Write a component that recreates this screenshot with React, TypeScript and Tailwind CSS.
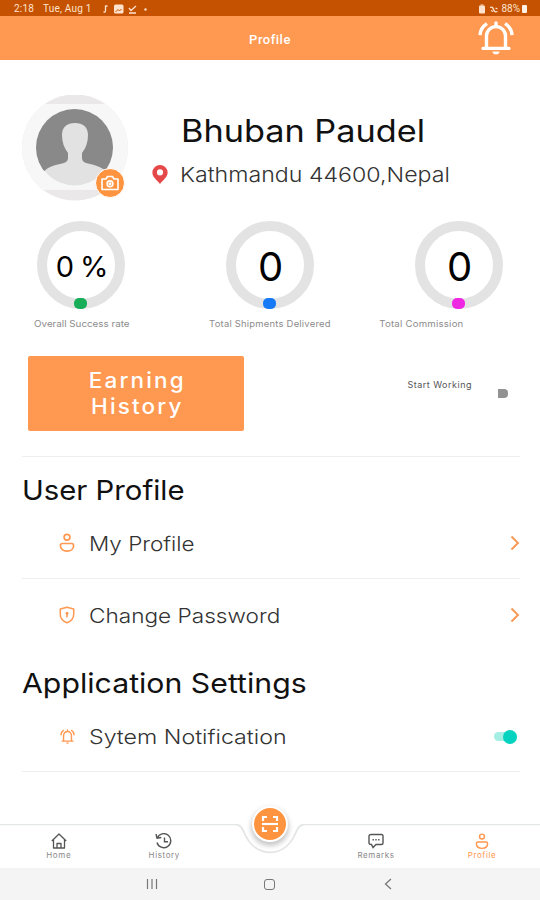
import type { ReactNode } from 'react';

interface IconProps {
    className?: string;
}

function BellIcon({ className }: IconProps) {
    return (
        <svg viewBox="0 0 36 36" preserveAspectRatio="none" fill="none" stroke="currentColor" strokeWidth="3.400" className={className}>
            <path d="M18 2v4M5 29h26M8.500 29V16a9.500 10 0 0 1 19 0v13" strokeLinecap="round" />
            <path d="M2 15C2.300 9.500 4.800 5.500 9 2.800M34 15C33.700 9.500 31.200 5.500 27 2.800" />
            <path d="M14.500 32.300h7a3.500 3 0 0 1-7 0z" fill="currentColor" stroke="none" />
        </svg>
    );
}

function UserIcon({ className }: IconProps) {
    return (
        <svg viewBox="0 0 16 20" fill="none" stroke="currentColor" strokeWidth="1.7" className={className}>
            <circle cx="8" cy="4.200" r="2.900" />
            <path d="M3.400 10.500h9.200c1.300 0 2 .8 2 1.900 0 3.400-2.700 5.700-6.600 5.700s-6.600-2.300-6.600-5.700c0-1.100.7-1.900 2-1.900z" />
        </svg>
    );
}

function ShieldIcon({ className }: IconProps) {
    return (
        <svg viewBox="0 0 16 18" fill="none" stroke="currentColor" strokeWidth="1.5" className={className}>
            <path d="M8 1.200 14.700 3v5.500c0 4-2.800 6.700-6.700 8.300-3.900-1.600-6.700-4.300-6.700-8.300V3z" strokeLinejoin="round" />
            <circle cx="8" cy="7.300" r="1.500" fill="currentColor" stroke="none" />
            <path d="M8 7.500v4" />
        </svg>
    );
}

function Ring({ value, label, dot, valueClass, labelClass }: { value: string; label: string; dot: string; valueClass: string; labelClass: string }) {
    return (
        <div className="flex w-[88px] flex-col items-center">
            <div className="relative flex size-[88px] items-center justify-center rounded-full border-[10px] border-[#e3e3e3]">
                <span className={`pt-[3px] pl-px whitespace-nowrap text-black ${valueClass}`}>{value}</span>
                <span className={`absolute -bottom-[10px] left-[26.5px] h-[11px] w-[13px] rounded-[5px] ${dot}`} />
            </div>
            <span className={`relative mt-[8px] text-[9px] leading-[13px] whitespace-nowrap text-[#8c8c8c] ${labelClass}`}>{label}</span>
        </div>
    );
}

function Row({ icon, label, labelClass, children }: { icon: ReactNode; label: string; labelClass: string; children: ReactNode }) {
    return (
        <div className="flex h-full items-center">
            <div className="ml-[37px] flex w-4 shrink-0 justify-center text-[#ff9850]">{icon}</div>
            <span className={`ml-[14px] origin-left pt-px text-[20px] font-light whitespace-nowrap text-[#333] ${labelClass}`}>{label}</span>
            <div className="ml-auto">{children}</div>
        </div>
    );
}

function Chevron() {
    return (
        <svg viewBox="0 0 10 16" fill="none" stroke="#f79a55" strokeWidth="2" className="h-4 w-[10px]">
            <path d="M1.500 1.500 8 8l-6.500 6.500" />
        </svg>
    );
}

function NavItem({ label, active, children }: { label: string; active?: boolean; children: ReactNode }) {
    return (
        <div className={`flex flex-1 flex-col items-center ${active ? 'text-[#ff9850]' : 'text-[#555]'}`}>
            <div className="flex h-[18px] items-center">{children}</div>
            <span className={`text-[8px] leading-[11px] tracking-[0.6px] ${active ? '' : 'text-[#888]'}`}>{label}</span>
        </div>
    );
}

export default function App() {
    return (
        <div className="flex h-[900px] w-[540px] flex-col overflow-hidden bg-white font-['Inter','Liberation_Sans',sans-serif]">
            {/* Status bar */}
            <div className="flex h-4 shrink-0 items-center bg-[#c45200] pt-px pr-[13px] pl-[14px] font-['Roboto',sans-serif] text-[10px] text-[#ffe3cf]">
                <span className="w-[29px] tracking-[0.2px]">2:18</span>
                <span className="w-[58px] tracking-[0.2px]">Tue, Aug 1</span>
                <svg viewBox="0 0 50 12" className="h-3 w-[50px]" fill="none" stroke="currentColor">
                    <path d="M4.500 2.500v6M4.500 3h2M2.500 9h2" strokeWidth="1.300" />
                    <rect x="13" y="1.500" width="9.500" height="9" rx="1.500" fill="currentColor" stroke="none" />
                    <path d="m14.500 9 2.500-2.500L18.500 8l2-2" stroke="#c45200" />
                    <path d="M28 5l2 2.500L35 3M28 10h7" strokeWidth="1.300" />
                    <circle cx="44.500" cy="6.500" r="1.200" fill="currentColor" stroke="none" />
                </svg>
                <svg viewBox="0 0 24 12" className="ml-auto h-3 w-6" fill="none" stroke="currentColor">
                    <rect x="0" y="2.500" width="6" height="8" rx="1" fill="currentColor" stroke="none" />
                    <path d="M1.500 2h3" />
                    <path d="M11 4.500c2-1 3 0 3.500 2s2 3 4 2M12 7.500l2 1M16.500 5l2 1" strokeWidth="1.300" />
                </svg>
                <span className="-ml-[2px]">88%</span>
                <span className="ml-[2px] h-[8px] w-[5px] rounded-[1px] bg-[#fff0e5]" />
            </div>

            {/* Header */}
            <header className="flex h-[44px] shrink-0 items-center bg-[#ff9850] text-white">
                <h1 className="w-full pt-[3px] pl-[80px] text-center font-['Roboto',sans-serif] text-[13px] font-medium tracking-[0.5px]">Profile</h1>
                <BellIcon className="mr-[26px] ml-[18px] h-[34px] w-9 shrink-0" />
            </header>

            <main className="h-[764px] shrink-0 pr-[20px] pl-[22px]">
                {/* Person */}
                <section className="flex h-[161px] pt-[35px]">
                    <div className="relative size-[106px] shrink-0">
                        <svg viewBox="0 0 106 106" className="size-full">
                            <defs>
                                <clipPath id="outer">
                                    <circle cx="53" cy="52.500" r="53" />
                                </clipPath>
                                <clipPath id="inner">
                                    <circle cx="52.500" cy="52.500" r="38.500" />
                                </clipPath>
                            </defs>
                            <g clipPath="url(#outer)">
                                <rect width="106" height="106" fill="#eae8e8" />
                                <rect y="9" width="106" height="86" fill="#f7f7f7" />
                            </g>
                            <circle cx="52.500" cy="52.500" r="38" fill="#e2e2e2" />
                            <g clipPath="url(#inner)">
                                <path
                                    d="M0 0h106v79H87c-4-5-10-8-19-10-6-1-8-3-8-6v-5c4-5 6-11 6-18 0-8-5-12-13-12s-13 4-13 12c0 7 2 13 6 18v5c0 3-2 5-8 6-9 2-14 4-18 10H0z"
                                    fill="#898989"
                                />
                            </g>
                        </svg>
                        <div className="absolute top-[73px] left-[73px] flex size-[30px] items-center justify-center rounded-full border border-white bg-[#ff9440]">
                            <svg viewBox="0 0 18 16" fill="none" stroke="white" strokeWidth="1.600" className="h-4 w-[18px]">
                                <path d="M1 4h4l1.500-2.500h5L13 4h4v10.500H1z" strokeLinejoin="round" />
                                <circle cx="9" cy="8.800" r="2.900" />
                                <circle cx="9" cy="8.800" r=".7" />
                            </svg>
                        </div>
                    </div>
                    <div className="ml-[23px] flex flex-col pt-[17px]">
                        <h2 className="ml-[29.5px] origin-left scale-x-[1.105] text-[31px] leading-[38px] whitespace-nowrap text-[#111]">Bhuban Paudel</h2>
                        <div className="mt-[10px] flex items-center">
                            <svg viewBox="0 0 18 22" className="h-[21px] w-[18px]">
                                <path d="M9 1a8 8 0 0 1 8 8c0 5-5 8-8 12C6 17 1 14 1 9a8 8 0 0 1 8-8z" fill="#e54848" />
                                <circle cx="9" cy="8.800" r="3.200" fill="#fff" />
                            </svg>
                            <span className="ml-[11px] origin-left scale-x-[1.13] pt-[2px] text-[20.500px] leading-[26px] font-light whitespace-nowrap text-[#333]">
                                Kathmandu 44600,Nepal
                            </span>
                        </div>
                    </div>
                </section>

                {/* Totals */}
                <section className="flex h-[135px] justify-between pr-[17px] pl-[15px]">
                    <Ring value="0 %" label="Overall Success rate" dot="bg-[#18ad58]" valueClass="text-[29px] tracking-[-1.2px]" labelClass="scale-x-[1.09] left-px" />
                    <Ring value="0" label="Total Shipments Delivered" dot="bg-[#1679f5]" valueClass="text-[40px]" labelClass="scale-x-[1.05] tracking-[0.2px]" />
                    <Ring value="0" label="Total Commission" dot="bg-[#ee27e2]" valueClass="text-[40px]" labelClass="right-[38px] scale-x-[1.07] tracking-[0.2px]" />
                </section>

                <section className="flex h-[101px] border-b border-[#eee]">
                    <button className="ml-[6px] h-[75px] w-[216px] rounded-[2px] bg-[#ff9850] pt-px pl-[2px] text-[21px] leading-[26px] font-medium tracking-[2px] text-white">
                        <span className="inline-block scale-x-[1.07]">
                            Earning
                            <br />
                            History
                        </span>
                    </button>
                    <div className="ml-auto flex pr-[12px]">
                        <span className="mt-[22px] text-[9px] leading-[14px] tracking-[0.5px] whitespace-nowrap text-[#555]">Start Working</span>
                        <span className="mt-[33px] ml-[26px] h-[9px] w-[10px] rounded-r-[4px] bg-[#929292]" />
                    </div>
                </section>

                {/* Settings */}
                <h2 className="h-[51px] origin-left scale-x-[1.065] pt-[14px] text-[27.500px] leading-[38px] text-[#111]">User Profile</h2>
                <div className="h-[71px] border-b border-[#eee]">
                    <Row icon={<UserIcon className="h-5 w-4" />} label="My Profile" labelClass="scale-x-[1.125]">
                        <Chevron />
                    </Row>
                </div>
                <div className="h-[72px]">
                    <Row icon={<ShieldIcon className="h-[18px] w-4" />} label="Change Password" labelClass="scale-x-[1.13]">
                        <Chevron />
                    </Row>
                </div>
                <h2 className="h-[51px] origin-left scale-x-[1.1] pt-[13px] text-[27.500px] leading-[38px] text-[#111]">Application Settings</h2>
                <div className="h-[70px] border-b border-[#eee]">
                    <Row icon={<BellIcon className="size-[15px]" />} label="Sytem Notification" labelClass="scale-x-[1.16]">
                        <div className="mr-[3px] flex h-[9px] w-[23px] items-center justify-end rounded-full bg-[#a5eee4]">
                            <span className="size-[14px] shrink-0 rounded-full bg-[#06d3bf]" />
                        </div>
                    </Row>
                </div>
            </main>

            {/* Bottom tabs */}
            <nav className="relative flex h-[44px] shrink-0 pt-[8px]">
                <svg viewBox="0 0 540 44" fill="none" className="absolute inset-x-0 top-0 h-[44px] w-[540px]">
                    <path d="M0 .3H234c6 0 8 3 11 10 5 11 14 18 25 18s20-7 25-18c3-7 5-10 11-10H540" stroke="#e4e5e6" strokeWidth="1.800" />
                </svg>
                <div className="relative flex w-[217px] pl-[6px]">
                    <NavItem label="Home">
                        <svg viewBox="0 0 16 16" fill="none" stroke="currentColor" strokeWidth="1.300" className="size-4">
                            <path d="M.8 8 8 1l7.200 7M2.500 6.500V15h11V6.500M6 15v-4.500h4V15" strokeLinejoin="round" />
                        </svg>
                    </NavItem>
                    <NavItem label="History">
                        <svg viewBox="0 0 18 16" fill="none" stroke="currentColor" strokeWidth="1.400" className="h-4 w-[18px]">
                            <path d="M2.300 5A7 7 0 1 1 2 9.500M1 1l1 4.300 4.300-.8M9.500 4.500v4.200h3.500" />
                        </svg>
                    </NavItem>
                </div>
                <div className="relative flex w-[106px] justify-center">
                    <div className="absolute -top-[26px] flex size-[36px] items-center justify-center rounded-full border-2 border-white bg-[#ff9440] shadow-[0_3px_5px_1px_rgba(0,0,0,0.22)]">
                        <svg viewBox="0 0 18 18" fill="none" stroke="white" strokeWidth="2.200" className="size-[18px]">
                            <path d="M2 6V2h4M12 2h4v4M16 12v4h-4M6 16H2v-4" />
                            <path d="M1 9h16" />
                        </svg>
                    </div>
                </div>
                <div className="relative flex w-[217px] pr-[5px]">
                    <NavItem label="Remarks">
                        <svg viewBox="0 0 16 16" fill="none" stroke="currentColor" strokeWidth="1.400" className="size-4">
                            <path d="M3 1.500h10.500c1 0 1.500.5 1.500 1.500v7c0 1-.5 1.500-1.500 1.500H8L5 14.500 3.500 11.500H3c-1 0-2-.5-2-1.500V3c0-1 1-1.500 2-1.500z" />
                            <path d="M4.500 6.800h1.400M7.300 6.800h1.400M10.100 6.800h1.400" />
                        </svg>
                    </NavItem>
                    <NavItem label="Profile" active>
                        <UserIcon className="h-[17px] w-[14px]" />
                    </NavItem>
                </div>
            </nav>

            {/* System buttons */}
            <div className="flex h-8 shrink-0 items-center bg-[#f4f4f4] pl-[146px] text-[#777]">
                <svg viewBox="0 0 12 12" stroke="currentColor" strokeWidth="1.200" className="size-3">
                    <path d="M1.500 1v10M6 1v10M10.500 1v10" />
                </svg>
                <span className="ml-[106px] size-[11px] rounded-[3px] border-[1.5px] border-[#777]" />
                <svg viewBox="0 0 8 12" fill="none" stroke="currentColor" strokeWidth="1.300" className="ml-[109px] h-3 w-2">
                    <path d="M7 1 1.500 6 7 11" />
                </svg>
            </div>
        </div>
    );
}
